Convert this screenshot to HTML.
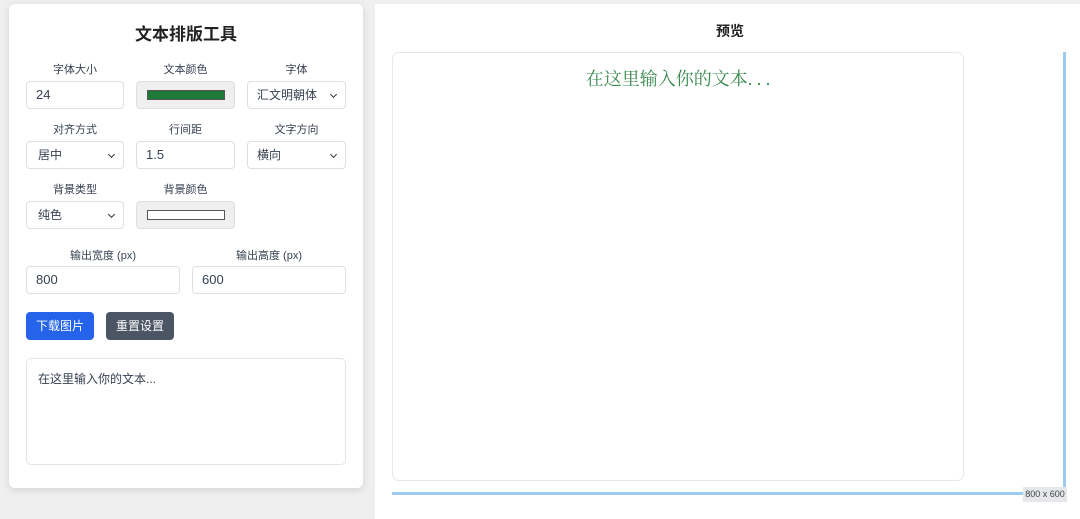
<!DOCTYPE html>
<html><head><meta charset="utf-8"><style>
*{box-sizing:border-box;margin:0;padding:0}
body{width:1080px;height:515px;background:#efefef;font-family:"Liberation Sans","Noto Sans CJK SC",sans-serif;position:relative;overflow:hidden;color:#1f2937}
.a{position:absolute}
.panel{left:9px;top:4px;width:354px;height:484px;background:#fff;border-radius:6px;box-shadow:0 2px 8px rgba(0,0,0,.12)}
.right{left:375px;top:4px;width:705px;height:515px;background:#fff}
.lbl{font-size:11px;color:#374151;text-align:center}
.inp{border:1px solid #dcdfe4;border-radius:4px;background:#fff;font-size:13px;color:#374151;padding-left:9px;line-height:26px;height:28px}
.sel{font-size:12px}
.sel::after{content:"";position:absolute;right:9px;top:10px;width:4px;height:4px;border-right:1.5px solid #333;border-bottom:1.5px solid #333;transform:rotate(45deg)}
.col{background:#efefef;border-radius:4px;border:1px solid #dcdfe4}
.btn{height:28px;border-radius:4px;color:#fff;font-size:12px;text-align:center;line-height:28px}
</style></head><body>
<div class="a panel"></div>
<div class="a right"></div>
<div class="a" style="left:9px;top:20px;width:354px;text-align:center;font-size:17px;font-weight:bold;color:#222">文本排版工具</div>

<div class="a lbl" style="left:26px;top:61px;width:98px">字体大小</div>
<div class="a lbl" style="left:136px;top:61px;width:99px">文本颜色</div>
<div class="a lbl" style="left:247px;top:61px;width:99px">字体</div>
<div class="a inp" style="left:26px;top:81px;width:98px">24</div>
<div class="a col" style="left:136px;top:81px;width:99px;height:28px"><div class="a" style="left:10px;top:8px;width:78px;height:10px;background:#1f7a38;border:1px solid #555"></div></div>
<div class="a inp sel" style="left:247px;top:81px;width:99px">汇文明朝体</div>

<div class="a lbl" style="left:26px;top:121px;width:98px">对齐方式</div>
<div class="a lbl" style="left:136px;top:121px;width:99px">行间距</div>
<div class="a lbl" style="left:247px;top:121px;width:99px">文字方向</div>
<div class="a inp sel" style="left:26px;top:141px;width:98px;padding-left:11px">居中</div>
<div class="a inp" style="left:136px;top:141px;width:99px">1.5</div>
<div class="a inp sel" style="left:247px;top:141px;width:99px">横向</div>

<div class="a lbl" style="left:26px;top:181px;width:98px">背景类型</div>
<div class="a lbl" style="left:136px;top:181px;width:99px">背景颜色</div>
<div class="a inp sel" style="left:26px;top:201px;width:98px;padding-left:11px">纯色</div>
<div class="a col" style="left:136px;top:201px;width:99px;height:28px"><div class="a" style="left:10px;top:8px;width:78px;height:10px;background:#fff;border:1px solid #555"></div></div>

<div class="a lbl" style="left:26px;top:247px;width:154px">输出宽度 (px)</div>
<div class="a lbl" style="left:192px;top:247px;width:154px">输出高度 (px)</div>
<div class="a inp" style="left:26px;top:266px;width:154px">800</div>
<div class="a inp" style="left:192px;top:266px;width:154px">600</div>

<div class="a btn" style="left:26px;top:312px;width:68px;background:#2563eb">下载图片</div>
<div class="a btn" style="left:106px;top:312px;width:68px;background:#4b5563">重置设置</div>

<div class="a" style="left:26px;top:358px;width:320px;height:107px;border:1px solid #e3e5e9;border-radius:5px;font-size:12px;color:#374151;padding:11px 11px">在这里输入你的文本...</div>

<div class="a" style="left:700px;top:21px;width:60px;text-align:center;font-size:14px;font-weight:bold;color:#222">预览</div>

<div class="a" style="left:392px;top:52px;width:572px;height:429px;border:1px solid #e5e7eb;border-radius:7px"></div>
<div class="a" style="left:392px;top:65px;width:572px;text-align:center;font-family:'Liberation Serif','Noto Serif CJK SC',serif;font-size:18px;color:#3a8a50">在这里输入你的文本. . .</div>
<div class="a" style="left:1063px;top:52px;width:3px;height:442px;background:#9ccbf0"></div>
<div class="a" style="left:392px;top:492px;width:674px;height:3px;background:#9ccbf0"></div>
<div class="a" style="left:1023px;top:487px;width:44px;height:15px;background:#e5e7eb;font-size:9px;color:#444;text-align:center;line-height:15px">800 x 600</div>
</body></html>
